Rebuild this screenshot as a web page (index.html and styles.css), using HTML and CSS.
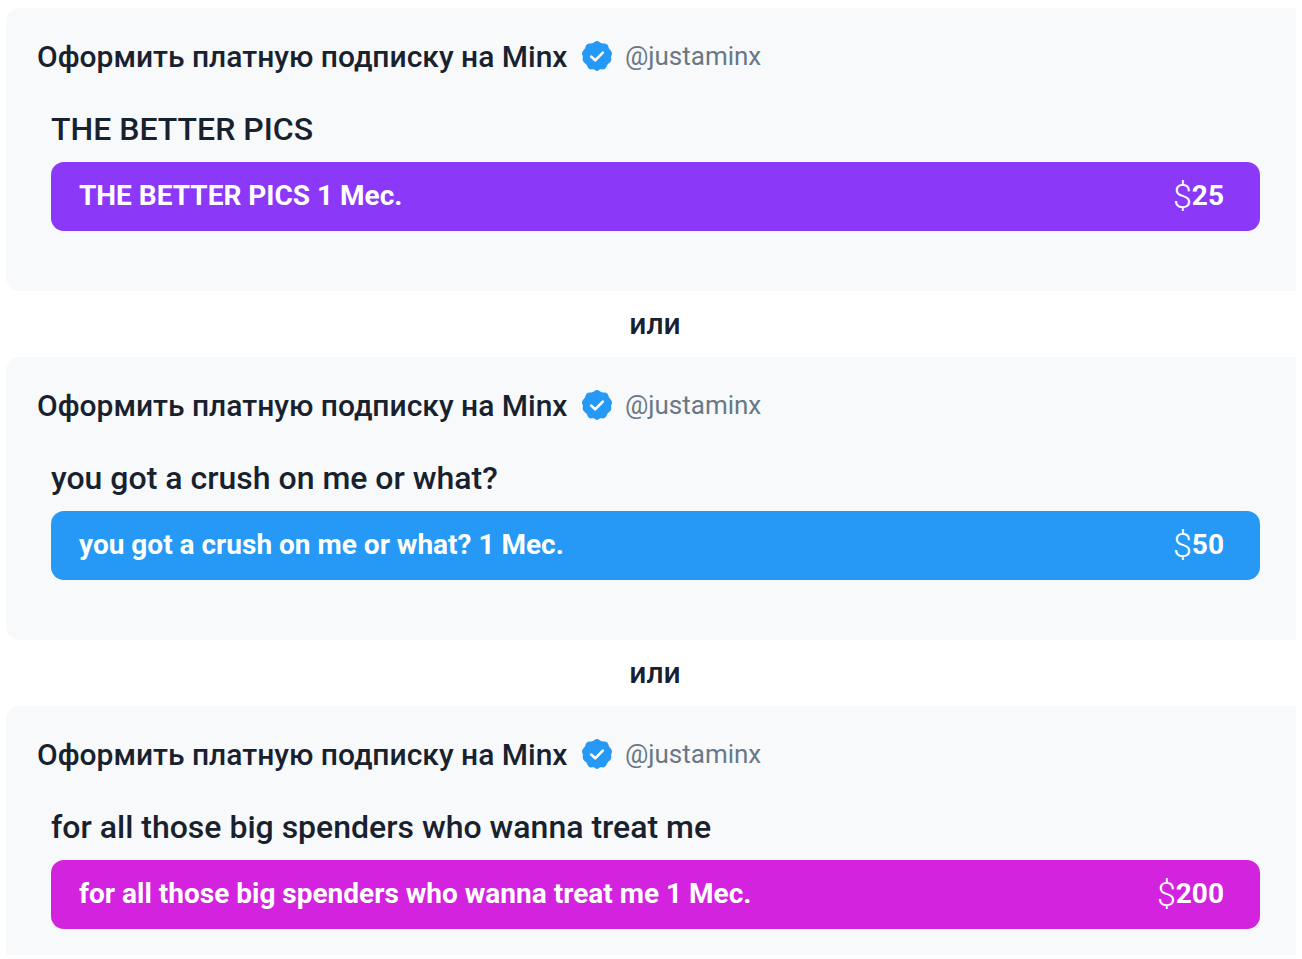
FILE: index.html
```html
<!DOCTYPE html>
<html lang="ru">
<head>
<meta charset="utf-8">
<title>Подписка</title>
<link rel="stylesheet" href="styles.css">
</head>
<body>
<svg class="defs" aria-hidden="true">
<symbol id="verified" viewBox="0 0 32 32">
<path fill="#2699f7" d="M16 1c2 0 3 1.700 4.800 2.300s3.700-.1 5.300 1.100 1.300 3.100 2.300 4.600 2.600 2.600 2.600 4.600c0 1.400-.9 2.200-.9 3.400s.5 2.200 0 3.700-2.400 2.400-3.500 3.900-1.200 3.500-2.900 4.400-3-.1-4.500.2S17.600 31 16 31s-1.700-1.500-3.200-1.800-3 .7-4.600-.2-1.700-3-2.800-4.400-3-2.400-3.500-3.900 0-2.500 0-3.700S1 15 1 13.600c0-2 1.600-3.100 2.600-4.600s.700-3.400 2.300-4.600 3.500-.5 5.300-1.100S14 1 16 1z"/>
<path fill="none" stroke="#fff" stroke-width="2.600" stroke-linecap="round" stroke-linejoin="round" d="M10.200 16.600l4 3.700 7.600-7.600"/>
</symbol>
</svg>
<main class="plans">
<section class="card">
<h2 class="heading">Оформить платную подписку на Minx <svg class="badge" role="img" aria-label="verified"><use href="#verified"/></svg><a class="handle" href="#">@justaminx</a></h2>
<div class="tier">
<h3 class="title">THE BETTER PICS</h3>
<button class="buy purple" type="button"><span>THE BETTER PICS 1 Мес.</span><span class="price"><span class="dollar">$</span>25</span></button>
</div>
</section>
<p class="or">или</p>
<section class="card">
<h2 class="heading">Оформить платную подписку на Minx <svg class="badge" role="img" aria-label="verified"><use href="#verified"/></svg><a class="handle" href="#">@justaminx</a></h2>
<div class="tier">
<h3 class="title">you got a crush on me or what?</h3>
<button class="buy blue" type="button"><span>you got a crush on me or what? 1 Мес.</span><span class="price"><span class="dollar">$</span>50</span></button>
</div>
</section>
<p class="or">или</p>
<section class="card last">
<h2 class="heading">Оформить платную подписку на Minx <svg class="badge" role="img" aria-label="verified"><use href="#verified"/></svg><a class="handle" href="#">@justaminx</a></h2>
<div class="tier">
<h3 class="title">for all those big spenders who wanna treat me</h3>
<button class="buy magenta" type="button"><span>for all those big spenders who wanna treat me 1 Мес.</span><span class="price"><span class="dollar">$</span>200</span></button>
</div>
</section>
</main>
</body>
</html>
```
FILE: styles.css
```css
* { box-sizing: border-box; }
body { margin: 0; background: #fff; color: #18222f; font-family: Roboto, "Noto Sans", sans-serif; }
.defs { display: none; }
.plans { padding: 8px 6px 4px; }
.card { padding: 30px 36px 60px 31px; background: #f8f9fb; border-radius: 14px 0 0 14px; }
.card.last { padding-bottom: 26px; border-bottom-left-radius: 0; }
.heading { display: flex; align-items: center; height: 36px; margin: 0; font-size: 30px; font-weight: 500; white-space: pre; }
.badge { width: 32px; height: 32px; margin-left: 6px; }
.handle { margin-left: 12px; color: #697887; font-size: 26px; font-weight: 400; text-decoration: none; }
.tier { padding: 36px 0 0 14px; }
.title { margin: 0 0 14px; font-size: 32px; line-height: 38px; font-weight: 500; }
.buy { display: flex; align-items: center; justify-content: space-between; width: 100%; height: 69px; padding: 0 36px 2px 28px; border: 0; border-radius: 13px; color: #fff; font: 700 28px Roboto, "Noto Sans", sans-serif; }
.purple { background: #8b38f8; }
.blue { background: #2699f7; }
.magenta { background: #d323df; }
.price { display: flex; align-items: center; }
.dollar { font-size: 34px; line-height: 32px; font-weight: 300; }
.or { margin: 0; padding-left: 8px; font-size: 30px; line-height: 66px; font-weight: 500; text-align: center; }
```
